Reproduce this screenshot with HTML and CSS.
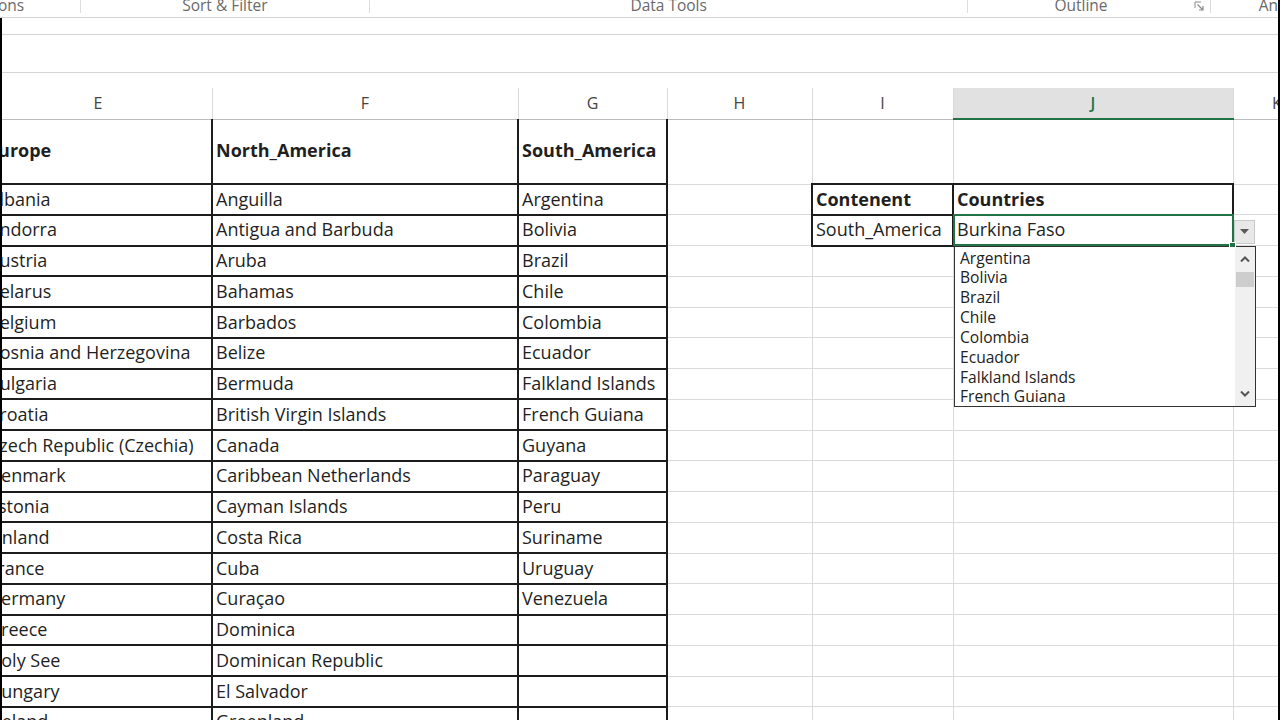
FILE: index.html
```html
<!DOCTYPE html>
<html lang="en">
<head>
    <meta charset="UTF-8">
    <meta name="viewport" content="width=device-width, initial-scale=1.0">
    <title>Dependent Drop-down List</title>
    <link rel="stylesheet" href="styles.css">
</head>
<body>
    <div class="screen">
        <div class="ribbon">
            <div class="group group-first"><span class="group-label">ons</span></div>
            <div class="group group-sort"><span class="group-label">Sort &amp; Filter</span></div>
            <div class="group group-tools"><span class="group-label">Data Tools</span></div>
            <div class="group group-outline">
                <span class="group-label">Outline</span>
                <svg class="launcher" width="10" height="10" viewBox="0 0 10 10">
                    <path d="M1 7V1h6" fill="none" stroke="#8a8a8a" stroke-width="1"/>
                    <path d="M3.5 3.5l5 5M9 5v4H5" fill="none" stroke="#8a8a8a" stroke-width="1.2"/>
                </svg>
            </div>
            <div class="group group-last"><span class="group-label">An</span></div>
        </div>

        <div class="workarea">
            <div class="bar-strip"></div>
            <div class="formula-bar"></div>

            <div class="sheet">
                <table class="grid">
                    <colgroup>
                        <col class="col-e">
                        <col class="col-f">
                        <col class="col-g">
                        <col class="col-h">
                        <col class="col-i">
                        <col class="col-j">
                        <col class="col-k">
                    </colgroup>
                    <thead>
                        <tr>
                            <th>E</th><th>F</th><th>G</th><th>H</th><th>I</th><th class="active">J</th><th>K</th>
                        </tr>
                    </thead>
                    <tbody>
                        <tr class="head-row">
                            <td class="t bold">Europe</td><td class="t bold">North_America</td><td class="t bold">South_America</td><td></td><td></td><td></td><td></td>
                        </tr>
                        <tr>
                            <td class="t">Albania</td><td class="t">Anguilla</td><td class="t">Argentina</td><td></td>
                            <td class="t bold">Contenent</td><td class="t bold">Countries</td><td></td>
                        </tr>
                        <tr>
                            <td class="t">Andorra</td><td class="t">Antigua and Barbuda</td><td class="t">Bolivia</td><td></td>
                            <td class="t">South_America</td>
                            <td class="t sel">Burkina Faso
                                <span class="sel-frame"></span>
                                <span class="fill-handle"></span>
                                <span class="dd-button">
                                    <svg width="9" height="5" viewBox="0 0 9 5"><path d="M0 0h9L4.5 5z" fill="#5a5a5a"/></svg>
                                </span>
                                <div class="dd-list">
                                    <ul class="dd-items">
                                        <li>Argentina</li>
                                        <li>Bolivia</li>
                                        <li>Brazil</li>
                                        <li>Chile</li>
                                        <li>Colombia</li>
                                        <li>Ecuador</li>
                                        <li>Falkland Islands</li>
                                        <li>French Guiana</li>
                                    </ul>
                                    <div class="scrollbar">
                                        <span class="scroll-btn scroll-up">
                                            <svg width="10" height="6" viewBox="0 0 10 6"><polyline points="1,5.5 5,1.5 9,5.5" fill="none" stroke="#555" stroke-width="2"/></svg>
                                        </span>
                                        <span class="scroll-thumb"></span>
                                        <span class="scroll-track"></span>
                                        <span class="scroll-btn scroll-down">
                                            <svg width="10" height="6" viewBox="0 0 10 6"><polyline points="1,0.5 5,4.5 9,0.5" fill="none" stroke="#555" stroke-width="2"/></svg>
                                        </span>
                                    </div>
                                </div>
                            </td>
                            <td></td>
                        </tr>
                        <tr><td class="t">Austria</td><td class="t">Aruba</td><td class="t">Brazil</td><td></td><td></td><td></td><td></td></tr>
                        <tr><td class="t">Belarus</td><td class="t">Bahamas</td><td class="t">Chile</td><td></td><td></td><td></td><td></td></tr>
                        <tr><td class="t">Belgium</td><td class="t">Barbados</td><td class="t">Colombia</td><td></td><td></td><td></td><td></td></tr>
                        <tr><td class="t">Bosnia and Herzegovina</td><td class="t">Belize</td><td class="t">Ecuador</td><td></td><td></td><td></td><td></td></tr>
                        <tr><td class="t">Bulgaria</td><td class="t">Bermuda</td><td class="t">Falkland Islands</td><td></td><td></td><td></td><td></td></tr>
                        <tr><td class="t">Croatia</td><td class="t">British Virgin Islands</td><td class="t">French Guiana</td><td></td><td></td><td></td><td></td></tr>
                        <tr><td class="t">Czech Republic (Czechia)</td><td class="t">Canada</td><td class="t">Guyana</td><td></td><td></td><td></td><td></td></tr>
                        <tr><td class="t">Denmark</td><td class="t">Caribbean Netherlands</td><td class="t">Paraguay</td><td></td><td></td><td></td><td></td></tr>
                        <tr><td class="t">Estonia</td><td class="t">Cayman Islands</td><td class="t">Peru</td><td></td><td></td><td></td><td></td></tr>
                        <tr><td class="t">Finland</td><td class="t">Costa Rica</td><td class="t">Suriname</td><td></td><td></td><td></td><td></td></tr>
                        <tr><td class="t">France</td><td class="t">Cuba</td><td class="t">Uruguay</td><td></td><td></td><td></td><td></td></tr>
                        <tr><td class="t">Germany</td><td class="t">Curaçao</td><td class="t">Venezuela</td><td></td><td></td><td></td><td></td></tr>
                        <tr><td class="t">Greece</td><td class="t">Dominica</td><td class="t"></td><td></td><td></td><td></td><td></td></tr>
                        <tr><td class="t">Holy See</td><td class="t">Dominican Republic</td><td class="t"></td><td></td><td></td><td></td><td></td></tr>
                        <tr><td class="t">Hungary</td><td class="t">El Salvador</td><td class="t"></td><td></td><td></td><td></td><td></td></tr>
                        <tr><td class="t">Iceland</td><td class="t">Greenland</td><td class="t"></td><td></td><td></td><td></td><td></td></tr>
                    </tbody>
                </table>
            </div>
        </div>
    </div>
</body>
</html>
```

FILE: styles.css
```css
:root {
    --grid-line: #dadada;
    --table-line: #1c1c1c;
    --excel-green: #217346;
    --chrome-line: #d4d4d4;
    --text-color: #1f1f1f;
}
body {
    margin: 0;
    background-color: #fff;
    font-family: 'Open Sans', 'Liberation Sans', sans-serif;
    color: var(--text-color);
    overflow: hidden;
}
.screen {
    width: 1280px;
    height: 720px;
    box-sizing: border-box;
    border-right: 2px solid #000;
    overflow: hidden;
}

/* ribbon group captions, mostly scrolled out of view */
.ribbon {
    display: flex;
    align-items: flex-start;
    height: 17px;
    border-bottom: 1px solid var(--chrome-line);
    overflow: hidden;
}
.group {
    display: flex;
    height: 13px;
    border-right: 1px solid #dcdcdc;
    box-sizing: border-box;
}
.group-label {
    font-size: 15.5px;
    line-height: 10px;
    color: #6a6a6a;
    white-space: nowrap;
}
.group-first {
    width: 81px;
}
.group-first .group-label {
    margin-left: -2px;
}
.group-sort {
    width: 290px;
    justify-content: center;
}
.group-tools {
    width: 600px;
    justify-content: center;
}
.group-outline {
    width: 243px;
    align-items: flex-start;
}
.group-outline .group-label {
    flex: 1;
    text-align: center;
}
.launcher {
    margin: 1px 6px 0 0;
}
.group-last {
    flex: 1;
    border-right: none;
    padding-left: 48px;
}

.workarea {
    border-left: 2px solid #000;
    height: 702px;
    overflow: hidden;
}
.bar-strip {
    height: 16px;
    border-bottom: 1px solid var(--chrome-line);
}
.formula-bar {
    height: 37px;
    border-bottom: 1px solid var(--chrome-line);
}
.sheet {
    padding-top: 15px;
    overflow: hidden;
}

/* worksheet grid */
.grid {
    border-collapse: collapse;
    table-layout: fixed;
    width: 1337px;
    margin-left: -19px;
}
.col-e { width: 228px; }
.col-f { width: 306px; }
.col-g { width: 149px; }
.col-h { width: 145px; }
.col-i { width: 141px; }
.col-j { width: 280px; }
.col-k { width: 88px; }

.grid th {
    height: 30px;
    padding: 0;
    font-size: 16px;
    font-weight: 400;
    color: #444;
    text-align: center;
    border: 1px solid var(--grid-line);
    border-top: none;
    border-bottom-color: #bcbcbc;
}
.grid th.active {
    background-color: #e1e1e1;
    color: var(--excel-green);
    font-weight: 600;
    border-bottom: 2px solid var(--excel-green);
}
.grid td {
    height: 28.75px;
    padding: 0 3px;
    font-size: 18px;
    line-height: 1.2;
    white-space: nowrap;
    overflow: hidden;
    vertical-align: middle;
    border: 1px solid var(--grid-line);
}
.grid td.t {
    border: 2px solid var(--table-line);
}
.grid .head-row td {
    height: 63px;
}
.grid .head-row td.t {
    border-top: 1px solid #bcbcbc;
}
.grid td.bold {
    font-weight: 700;
}

/* active cell with its validation list */
.grid td.sel {
    position: relative;
    overflow: visible;
}
.sel-frame {
    position: absolute;
    top: -2px;
    left: -1px;
    right: -2px;
    bottom: -1px;
    border: 2px solid var(--excel-green);
}
.fill-handle {
    position: absolute;
    right: -4px;
    bottom: -3px;
    width: 5px;
    height: 4px;
    background-color: var(--excel-green);
    border: 1px solid #fff;
    z-index: 4;
}
.dd-button {
    position: absolute;
    left: calc(100% + 2px);
    top: 4px;
    width: 21px;
    height: 24px;
    box-sizing: border-box;
    background-color: #e8e8e8;
    border: 1px solid #c9c9c9;
    display: flex;
    align-items: center;
    justify-content: center;
}
.dd-list {
    position: absolute;
    left: 0;
    top: calc(100% + 1px);
    width: 302px;
    height: 161px;
    box-sizing: border-box;
    border: 1px solid #333;
    background-color: #fff;
    display: flex;
    z-index: 3;
}
.dd-items {
    flex: 1;
    list-style: none;
    margin: 0;
    padding: 2px 0 0 5px;
    font-size: 15.6px;
    font-weight: 400;
    line-height: 19.85px;
    color: #222;
    overflow: hidden;
}
.scrollbar {
    width: 20px;
    display: flex;
    flex-direction: column;
    background-color: #f0f0f0;
}
.scroll-btn {
    display: flex;
    align-items: center;
    justify-content: center;
}
.scroll-up {
    height: 25px;
}
.scroll-down {
    height: 24px;
}
.scroll-thumb {
    height: 15px;
    margin: 0 1px;
    background-color: #cdcdcd;
}
.scroll-track {
    flex: 1;
}
```
